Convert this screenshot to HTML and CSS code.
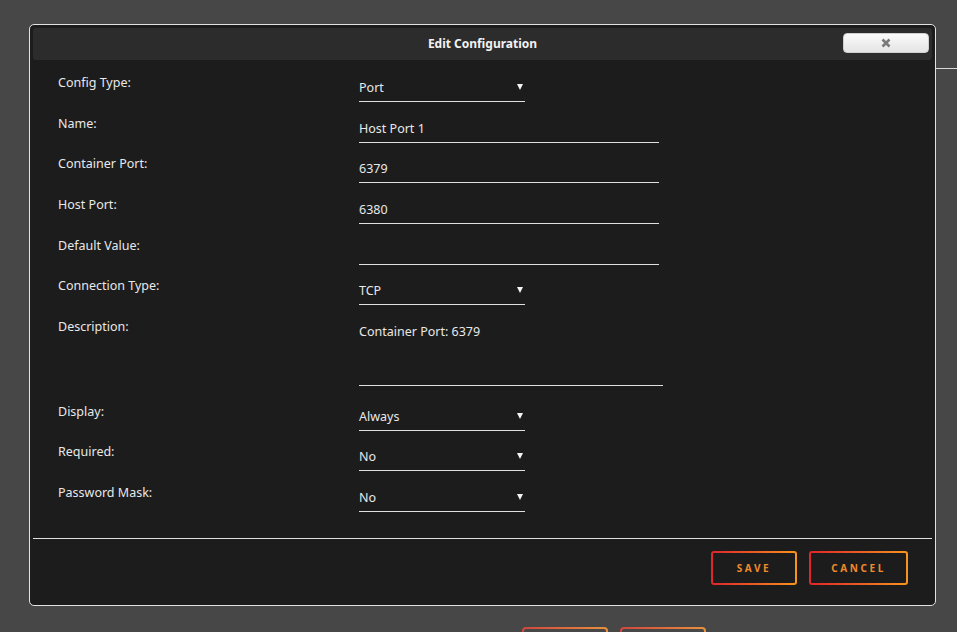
FILE: index.html
```html
<!DOCTYPE html>
<html>
  <head>
    <meta charset="UTF-8" />
    <title>Edit Configuration</title>
    <link rel="stylesheet" href="styles.css">
  </head>

  <body>
    <div class="page">
      <div class="page-header"></div>
      <div class="page-body"></div>
      <div class="page-actions">
        <div class="ghost-btn"></div>
        <div class="ghost-btn"></div>
      </div>
    </div>

    <div class="dialog">
      <div class="dialog-title">
        <span>Edit Configuration</span>
        <div class="close-btn">
          <svg width="10" height="10" viewBox="0 0 10 10">
            <path d="M1.5 1.5 L8.5 8.5 M8.5 1.5 L1.5 8.5" stroke="#7a7a7a" stroke-width="2.6" stroke-linecap="butt" />
          </svg>
        </div>
      </div>

      <div class="form">
        <div class="label">Config Type:</div>
        <div class="field select">Port<span class="caret"></span></div>

        <div class="label">Name:</div>
        <div class="field text">Host Port 1</div>

        <div class="label">Container Port:</div>
        <div class="field text">6379</div>

        <div class="label">Host Port:</div>
        <div class="field text">6380</div>

        <div class="label">Default Value:</div>
        <div class="field text"></div>

        <div class="label">Connection Type:</div>
        <div class="field select">TCP<span class="caret"></span></div>

        <div class="label">Description:</div>
        <div class="field textarea">Container Port: 6379</div>

        <div class="label">Display:</div>
        <div class="field select">Always<span class="caret"></span></div>

        <div class="label">Required:</div>
        <div class="field select">No<span class="caret"></span></div>

        <div class="label">Password Mask:</div>
        <div class="field select">No<span class="caret"></span></div>
      </div>

      <div class="dialog-footer">
        <div class="btn">SAVE</div>
        <div class="btn btn-cancel">CANCEL</div>
      </div>
    </div>
  </body>
</html>
```

FILE: styles.css
```css
html,
body {
  margin: 0;
  height: 100%;
  overflow: hidden;
}

body {
  font-family: 'Noto Sans', 'Open Sans', sans-serif;
  font-size: 12.5px;
  line-height: 16px;
  color: #e8e8e8;
  background: #474747;
}

.page-header {
  height: 68px;
  margin-left: 600px;
  border-bottom: 1px solid #d8d8d8;
}

.page-body {
  height: 558px;
}

.page-actions {
  display: flex;
  gap: 12px;
  padding-left: 522px;
}

.ghost-btn {
  width: 82px;
  height: 30px;
  border: 2px solid transparent;
  border-radius: 4px;
  background: linear-gradient(#474747, #474747) padding-box,
    linear-gradient(90deg, #d2453e, #e8923e) border-box;
}

/* dialog */
.dialog {
  position: absolute;
  top: 24px;
  left: 29px;
  width: 899px;
  height: 574px;
  padding: 3px;
  border: 1px solid #e2e2e2;
  border-radius: 5px;
  background: #1c1c1c;
}

.dialog-title {
  position: relative;
  height: 32px;
  border-radius: 3px;
  background: #2c2c2c;
  display: flex;
  justify-content: center;
  align-items: center;
  font-size: 12px;
  font-weight: 700;
  color: #f2f2f2;
}

.close-btn {
  position: absolute;
  top: 5px;
  right: 3px;
  width: 84px;
  height: 18px;
  border: 1px solid #d0d0d0;
  border-radius: 4px;
  background: linear-gradient(#fbfbfb, #e4e4e4);
  display: flex;
  justify-content: center;
  align-items: center;
}

.form {
  display: grid;
  grid-template-columns: 301px 1fr;
  row-gap: 12.67px;
  padding: 14px 0 26px 25px;
  align-items: start;
}

.label {
  padding-top: 1px;
  line-height: 16px;
}

.field {
  position: relative;
  box-sizing: border-box;
  height: 28px;
  padding: 6px 0 0 0;
  border-bottom: 1px solid #e0e0e0;
}

.field.select {
  width: 166px;
}

.field.text {
  width: 300px;
}

.field.textarea {
  width: 304px;
  height: 68px;
  margin-bottom: 4px;
}

.caret {
  position: absolute;
  top: 10px;
  right: 2px;
  border-left: 3px solid transparent;
  border-right: 3px solid transparent;
  border-top: 6px solid #f4f4f4;
}

.dialog-footer {
  display: flex;
  justify-content: flex-end;
  gap: 12px;
  padding: 12px 24px 0 0;
  border-top: 1px solid #e0e0e0;
}

.btn {
  width: 82px;
  height: 30px;
  border: 2px solid transparent;
  border-radius: 3px;
  background: linear-gradient(#1c1c1c, #1c1c1c) padding-box,
    linear-gradient(90deg, #e0242c, #f7941d) border-box;
  display: flex;
  justify-content: center;
  align-items: center;
  font-size: 10px;
  font-weight: 700;
  letter-spacing: 2.6px;
  color: #f08a2a;
}

.btn-cancel {
  width: 95px;
}
```
